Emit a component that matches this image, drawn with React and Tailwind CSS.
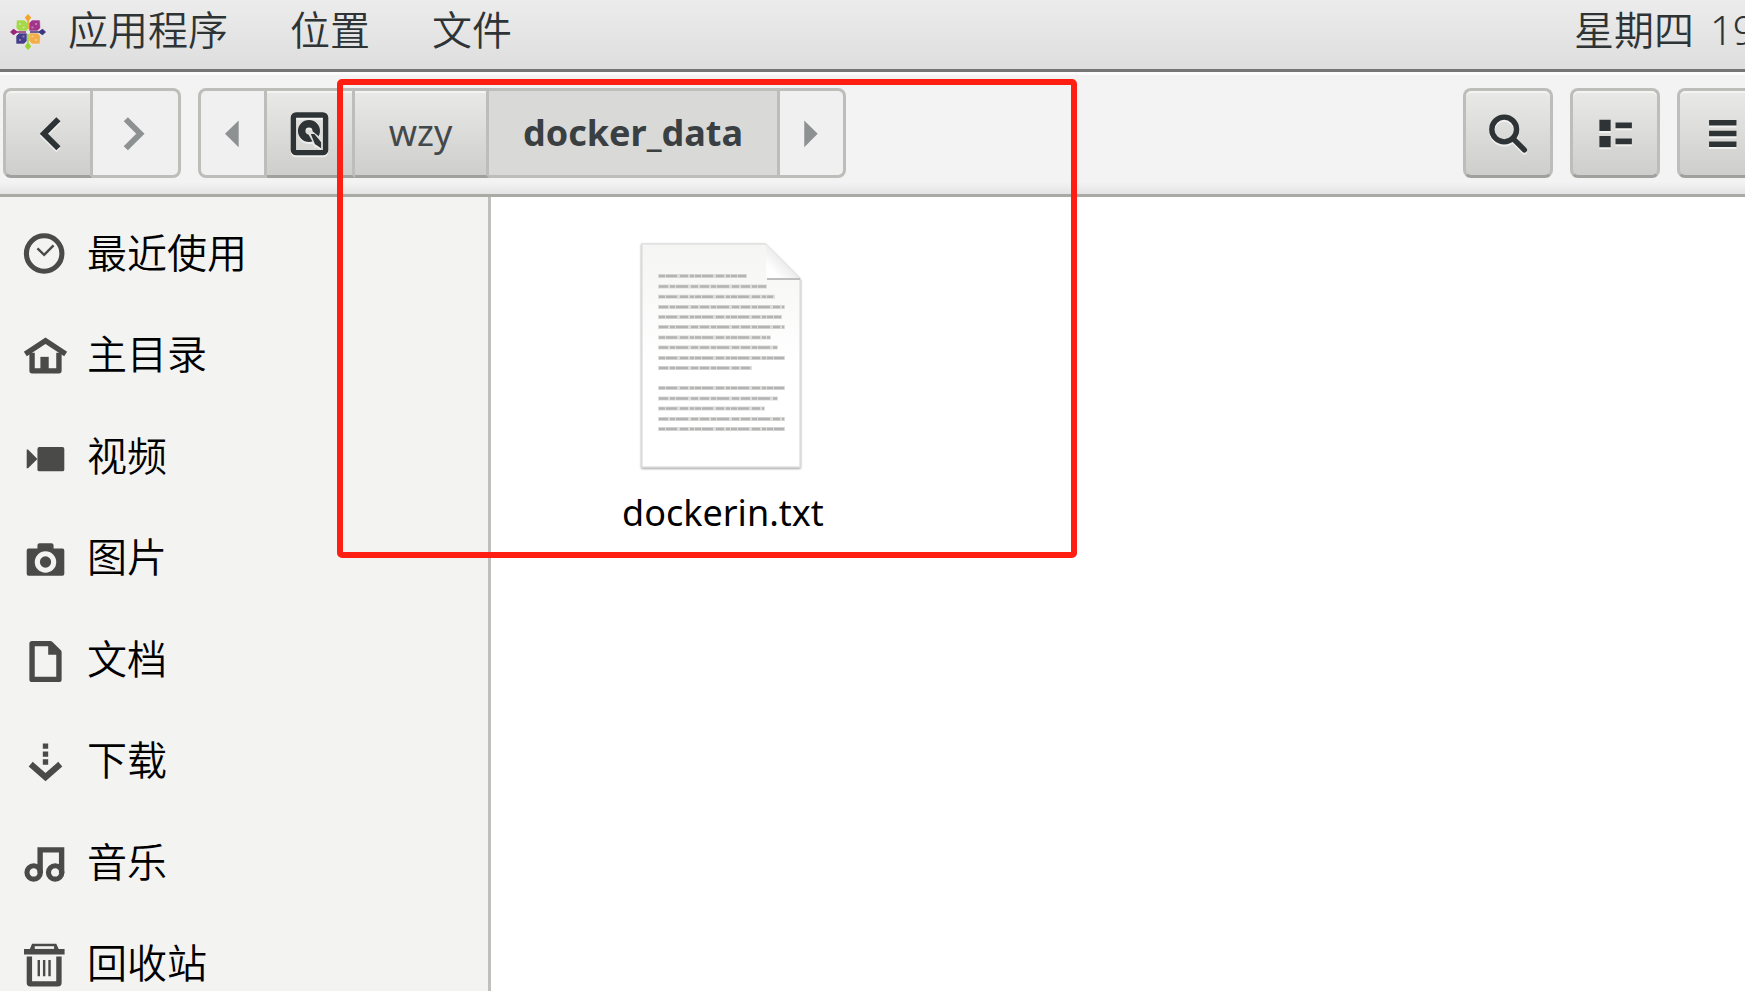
import React from "react";

function Icon({ children, className = "" }) {
  return (
    <svg
      viewBox="0 0 16 16"
      aria-hidden="true"
      className={`size-[43px] shrink-0 overflow-visible ${className}`}
      fill="none"
      stroke="currentColor"
    >
      {children}
    </svg>
  );
}

const icons = {
  recent: (
    <>
      <circle cx="7.5" cy="8" r="6.6" strokeWidth="1.9" />
      <path d="M5 6.1 7.5 8.5 11 5" strokeWidth="0.9" />
    </>
  ),
  home: (
    <>
      <path d="M0.5 7.4 8 2.5l7.5 4.9" strokeWidth="2" />
      <path d="M3 7v6.7h10V7" strokeWidth="2" strokeLinejoin="round" />
      <path d="M6.1 8.5h3.1v5H6.1z" fill="currentColor" stroke="none" />
    </>
  ),
  video: (
    <g fill="currentColor" stroke="none">
      <rect x="5" y="4.5" width="10" height="9" rx="0.7" />
      <path d="M1 5.4h.5L5 8.9l-3.5 3.5H1z" />
    </g>
  ),
  camera: (
    <g stroke="none">
      <path
        fill="currentColor"
        d="M5 4.3V3.1q0-.8.8-.8h4.4q.8 0 .8.8v1.2h3.3q.7 0 .7.7v8.7q0 .7-.7.7H1.7q-.7 0-.7-.7V5q0-.7.7-.7z"
      />
      <circle cx="8" cy="9.3" r="4" fill="#f3f3f2" />
      <circle cx="8" cy="9.3" r="2.1" fill="currentColor" />
    </g>
  ),
  document: (
    <>
      <path d="M3 2.1h6.8L13 5.3v10.1H3z" strokeWidth="2" strokeLinejoin="round" />
      <path d="M9 2v4.2h4V4.6L10.4 2z" fill="currentColor" stroke="none" />
    </>
  ),
  download: (
    <>
      <path d="M7 1.3h2v2H7zM7 4.3h2v1.9H7zM7 7.2h2v2H7z" fill="currentColor" stroke="none" />
      <path d="M2.5 9 8 13.8 13.5 9" strokeWidth="2.3" />
    </>
  ),
  music: (
    <>
      <circle cx="3.6" cy="11.7" r="2.5" strokeWidth="1.9" />
      <circle cx="11.6" cy="11.7" r="2.5" strokeWidth="1.9" />
      <path d="M6 12V3.3h8V12" strokeWidth="2" />
    </>
  ),
  trash: (
    <>
      <path d="M0 2.2h2.2L3 .3h9l.9 1.9h2.2v2.1H0z" fill="currentColor" stroke="none" />
      <path d="M4 1.7h7.2" stroke="#f3f3f2" strokeWidth="1" />
      <path d="M2 5v9.8q0 .4.4.4h10.2q.4 0 .4-.4V5" strokeWidth="2" />
      <path d="M5.5 6.3v6.1M7.5 6.3v6.1M9.5 6.3v6.1" strokeWidth="0.9" />
    </>
  ),
};

const places = [
  ["最近使用", "recent"],
  ["主目录", "home"],
  ["视频", "video"],
  ["图片", "camera"],
  ["文档", "document"],
  ["下载", "download"],
  ["音乐", "music"],
  ["回收站", "trash"],
];

const raised =
  "bg-linear-to-b from-[#e9e9e8] to-[#cececc] shadow-[inset_0_2px_0_#f4f4f3] border-b-[#a0a19c]";
const flat = "bg-[#f0f0f0]";
const seg =
  "flex h-full items-center justify-center border-y-3 border-[#bdbeba] text-[#2e3436]";
const embossed = "drop-shadow-[0_2px_0_rgba(255,255,255,0.6)]";

function Logo() {
  return (
    <svg viewBox="0 0 36 36" className="size-9" aria-hidden="true">
      <g stroke="#e9e9e9" strokeWidth="0.6">
        <path d="M6.5 6h8l3 3v8H9l-3-3z" fill="#a5d94a" />
        <path d="M30 6h-8l-3 3v8h8.500l3-3z" fill="#a0358a" />
        <path d="M6 30h8l3-3v-8H9l-3 3z" fill="#453c8b" />
        <path d="M30 30h-8l-3-3v-8h8.500l3 3z" fill="#f3ae4a" />
      </g>
      <path d="M18 0l3.200 3.500L18.800 7v8h-1.600V7l-2.400-3.500z" fill="#f5a32a" />
      <path d="M36 18l-3.500 3.200L29 18.800h-9v-1.600h9l3.500-2.400z" fill="#3d3580" />
      <path d="M18 36l-3.200-3.500 2.400-3.500v-9h1.600v9l2.400 3.500z" fill="#9bd22f" />
      <path d="M0 18l3.500-3.200L7 17.200h9v1.600H7l-3.500 2.400z" fill="#98287c" />
      <g fill="#ffffff" fillOpacity="0.35">
        <path d="M9 9h2v2H9zM12.500 12.500h2v2h-2zM25 9h2v2h-2zM21.500 12.500h2v2h-2zM9 25h2v2H9zM12.500 21.500h2v2h-2zM25 25h2v2h-2zM21.500 21.500h2v2h-2z" />
      </g>
    </svg>
  );
}

function TopBar() {
  return (
    <header className="flex h-[72px] shrink-0 items-start overflow-hidden border-b-3 border-[#757575] bg-linear-to-b from-[#ececec] to-[#dedede] text-[40px] leading-[60px] font-[350] text-[#2e3436]">
      <nav className="flex shrink-0 gap-[62px] pl-2.5">
        <button type="button" className="flex items-center gap-[22px]">
          <span className="pt-1">
            <Logo />
          </span>
          应用程序
        </button>
        <button type="button">位置</button>
        <button type="button">文件</button>
      </nav>
      <div className="ml-auto flex w-[171px] shrink-0 gap-4 whitespace-nowrap">
        <span>星期四</span>
        <span>19</span>
      </div>
    </header>
  );
}

function Toolbar() {
  return (
    <div className="flex h-[125px] shrink-0 items-start overflow-hidden border-b-3 border-[#a9aaa5] bg-linear-to-b from-[#f3f3f3] from-90% to-[#e4e4e4] pt-4 pl-[3px] shadow-[inset_0_3px_0_#fcfcfc]">
      <div className="flex h-[90px] shrink-0">
        <button type="button" aria-label="Back" className={`${seg} ${raised} w-[90px] rounded-l-lg border-x-3`}>
          <Icon className={embossed}>
            <path d="M11.7 2.7 6.3 8.1l5.4 5.400" strokeWidth="2.2" />
          </Icon>
        </button>
        <button type="button" aria-label="Forward" className={`${seg} ${flat} w-[88px] rounded-r-lg border-r-3`}>
          <Icon className="text-[#8e9192]">
            <path d="M4.4 2.7 9.8 8.1l-5.4 5.4" strokeWidth="2.2" />
          </Icon>
        </button>
      </div>
      <nav aria-label="Path" className="ml-[17px] flex h-[90px] shrink-0 text-[36px] leading-[48px]">
        <button type="button" aria-label="Scroll left" className={`${seg} ${flat} w-[69px] rounded-l-lg border-x-3`}>
          <Icon className="text-[#8e9192]">
            <path d="M10.3 3.2v9.9L5.2 8.1z" fill="currentColor" stroke="none" />
          </Icon>
        </button>
        <button type="button" aria-label="Disk" className={`${seg} ${raised} w-[88px] border-r-3`}>
          <Icon className={embossed}>
            <rect x="2" y="1.1" width="12" height="14" rx="1" strokeWidth="2" />
            <circle cx="7.8" cy="7.1" r="2.7" strokeWidth="2.8" />
            <path d="M7.4 8l1.500-1 3.800 3-2.600 2.700z" fill="#dfdfdd" stroke="none" />
            <path d="M8.500 8.200h1.300l2.500 3v2.300l-2.300-1.600z" fill="currentColor" stroke="none" />
          </Icon>
        </button>
        <button type="button" className={`${seg} ${raised} w-[134px] border-r-3 text-[#43494b]`}>
          wzy
        </button>
        <button type="button" className={`${seg} w-[291px] border-r-3 bg-[#d9d9d8] font-bold text-[#3a4042]`}>
          docker_data
        </button>
        <button type="button" aria-label="Scroll right" className={`${seg} ${flat} w-[66px] rounded-r-lg border-r-3`}>
          <Icon className="text-[#8e9192]">
            <path d="M5.3 3.2v9.9l5-5z" fill="currentColor" stroke="none" />
          </Icon>
        </button>
      </nav>
      <div className="ml-auto flex h-[90px] w-[282px] shrink-0 gap-[17px]">
        <button type="button" aria-label="Search" className={`${seg} ${raised} w-[90px] shrink-0 rounded-lg border-x-3`}>
          <Icon className={embossed}>
            <circle cx="6.4" cy="6.5" r="4.6" strokeWidth="2" />
            <path d="M9.6 9.8l4.3 4.3" strokeWidth="2" strokeLinecap="round" />
          </Icon>
        </button>
        <button type="button" aria-label="View" className={`${seg} ${raised} w-[90px] shrink-0 rounded-lg border-x-3`}>
          <Icon className={embossed}>
            <path
              d="M2 2.9h4.2v4.2H2zM2 8.9h4.2v4.2H2zM8 3.9h6.1V6H8zM8 9.9h6.1V12H8z"
              fill="currentColor"
              stroke="none"
            />
          </Icon>
        </button>
        <button type="button" aria-label="Menu" className={`${seg} ${raised} w-[90px] shrink-0 rounded-lg border-x-3`}>
          <Icon className={embossed}>
            <path d="M3 3h10.2v2H3zM3 7h10.2v2H3zM3 11h10.2v2H3z" fill="currentColor" stroke="none" />
          </Icon>
        </button>
      </div>
    </div>
  );
}

function Sidebar() {
  return (
    <aside className="w-[491px] shrink-0 overflow-hidden border-r-3 border-[#bfc0bc] bg-[#f3f3f2] pt-1.5">
      <ul className="grid h-[812px] grid-rows-8">
        {places.map(([label, icon]) => (
          <li key={label} className="flex">
            <a href="#" className="flex flex-1 items-center gap-5 pl-6 text-[40px] leading-[56px] font-[350] text-black">
              <Icon className="text-[#4a4a48]">{icons[icon]}</Icon>
              <span className="pb-0.5">{label}</span>
            </a>
          </li>
        ))}
      </ul>
    </aside>
  );
}

const lines = [
  [33, 89], [43.5, 109], [53.7, 117], [64, 127], [74, 124], [84, 127], [94.5, 113],
  [104.5, 120], [115, 127], [125, 94], [145, 127], [155.5, 120], [165.5, 107], [176, 127], [186, 127],
];

function TextFile() {
  return (
    <svg viewBox="0 0 160 228" className="mr-1 h-[228px] w-[160px] overflow-visible" aria-hidden="true">
      <defs>
        <linearGradient id="paper" x1="0" y1="0" x2="0" y2="1">
          <stop offset="0" stopColor="#f5f5f4" />
          <stop offset="0.55" stopColor="#ffffff" />
        </linearGradient>
        <linearGradient id="fold" x1="0" y1="1" x2="1" y2="0">
          <stop offset="0.2" stopColor="#ffffff" />
          <stop offset="0.6" stopColor="#e6e6e6" />
        </linearGradient>
      </defs>
      <path
        d="M1 1h123l35 35v188H1z"
        fill="url(#paper)"
        stroke="#e2e2e2"
        strokeWidth="1.5"
        className="drop-shadow-[0_1px_1px_rgba(0,0,0,0.4)]"
      />
      <path d="M126 36h33" stroke="#bdbdbd" strokeWidth="2" />
      <path d="M125 1v34h33z" fill="url(#fold)" />
      {lines.map(([y, end], i) => (
        <g key={y}>
          <path d={`M17 ${y}H${end + 17}`} stroke="#dcdcdb" strokeWidth="4" />
          <path
            d={`M18 ${y}H${end + 16}`}
            stroke="#b4b4b4"
            strokeWidth="2.4"
            strokeDasharray={i % 2 ? "9 2 5 1 12 3 7 2" : "6 1 11 3 8 2 4 1"}
          />
        </g>
      ))}
    </svg>
  );
}

export default function App() {
  return (
    <div className="relative flex h-screen flex-col overflow-hidden bg-white font-['Noto_Sans','Noto_Sans_CJK_SC',sans-serif]">
      <TopBar />
      <Toolbar />
      <div className="flex min-h-0 flex-1">
        <Sidebar />
        <main className="flex-1 overflow-hidden pt-[46px] pl-[131px]">
          <figure className="flex w-fit flex-col items-center">
            <TextFile />
            <figcaption className="mt-[18px] text-[36px] leading-[48px] text-black">dockerin.txt</figcaption>
          </figure>
        </main>
      </div>
      <div className="pointer-events-none absolute top-[79px] left-[337px] h-[479px] w-[740px] rounded-[5px] border-6 border-[#ff1f12]" />
    </div>
  );
}
